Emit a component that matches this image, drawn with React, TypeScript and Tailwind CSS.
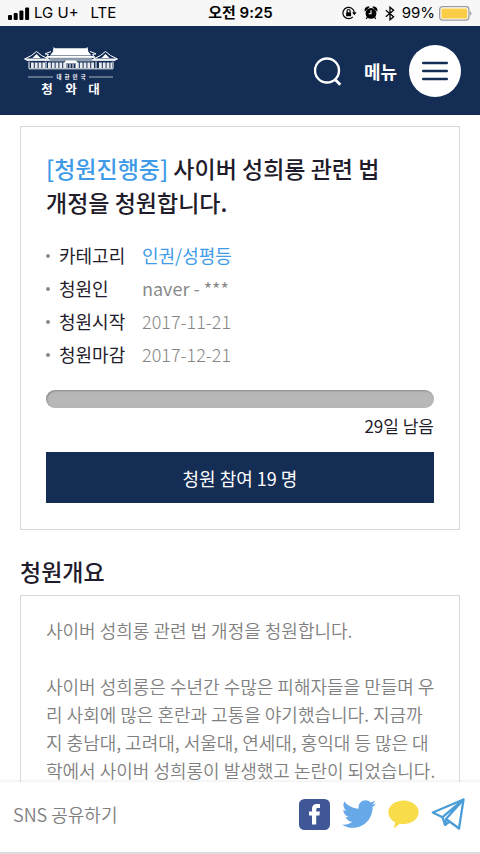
import React from 'react';
import { FaTwitter } from 'react-icons/fa';

interface MetaItem {
  label: string;
  value: string;
  className: string;
}

const meta: MetaItem[] = [
  { label: '카테고리', value: '인권/성평등', className: 'text-[#3f9be8]' },
  { label: '청원인', value: 'naver - ***', className: 'text-[#8a8a8a]' },
  { label: '청원시작', value: '2017-11-21', className: 'font-light text-[#858585]' },
  { label: '청원마감', value: '2017-12-21', className: 'font-light text-[#858585]' },
];

const StatusBar: React.FC = () => (
  <div className="grid h-[26px] shrink-0 grid-cols-[1fr_auto_1fr] items-center bg-[#f7f7f7] pr-[7px] pl-2 font-['Inter','Noto_Sans_CJK_KR',sans-serif] text-[15px] text-black">
    <div className="flex items-center gap-1">
      <svg width="22" height="13" viewBox="0 0 22 13" aria-hidden="true">
        <rect x="0" y="8" width="4" height="5" rx="1" />
        <rect x="5.7" y="6" width="4" height="7" rx="1" />
        <rect x="11.4" y="3.5" width="4" height="9.5" rx="1" />
        <rect x="17.1" y="0.5" width="4" height="12.5" rx="1" />
      </svg>
      <span>LG U+</span>
      <span className="ml-2">LTE</span>
    </div>
    <span className="font-semibold">오전 9:25</span>
    <div className="flex items-center justify-end gap-[7px]">
      <svg width="15" height="14" viewBox="0 0 15 14" fill="none" stroke="#000" strokeWidth="1.2" aria-hidden="true">
        <path d="M10.8 10.9A5.7 5.7 0 1 1 12.3 6.4" />
        <path d="M10.1 6.2h4.5l-2.3 3z" fill="#000" stroke="none" />
        <rect x="4.1" y="6.2" width="5" height="4" rx="0.5" fill="#000" stroke="none" />
        <path d="M5.1 6.4V5a1.5 1.5 0 0 1 3 0v1.4" />
      </svg>
      <svg width="14" height="14" viewBox="0 0 14 14" aria-hidden="true">
        <circle cx="7" cy="7.4" r="5.4" />
        <path d="M1.2 4.4A3 3 0 0 1 4.6 1.2zM12.8 4.4A3 3 0 0 0 9.4 1.2zM3.5 11l-1.3 2M10.5 11l1.3 2" stroke="#000" strokeWidth="1.2" />
        <path d="M7 4.2v3.6H4.6" fill="none" stroke="#fff" strokeWidth="1.1" />
      </svg>
      <svg width="10" height="15" viewBox="0 0 10 15" fill="none" stroke="#000" strokeWidth="1.3" aria-hidden="true">
        <path d="m.8 4.2 7.8 6.5L5 13.800V1.200l3.600 3.100L.8 10.800" />
      </svg>
      <div className="flex items-center gap-1">
        <span>99%</span>
        <svg width="34" height="15" viewBox="0 0 34 15" aria-hidden="true">
          <rect x="0.7" y="0.7" width="29.2" height="13.4" rx="2.8" fill="#fff" stroke="#9b9b9b" strokeWidth="1.3" />
          <rect x="2.4" y="2.4" width="25.8" height="10" rx="1" fill="#f9cd46" />
          <path d="M31.4 5q2 2.4 0 4.8z" fill="#777" />
        </svg>
      </div>
    </div>
  </div>
);

const Logo: React.FC = () => (
  <svg width="94" height="52" viewBox="0 0 94 52" fill="#fff" role="img" aria-label="대한민국 청와대">
    {/* main roof */}
    <path d="M29.5 2 31 3.2h31L63.500 2l.8 4.500 3 4H26l3-4z" />
    <path d="M27 6.500 21 8.800l3.500.8-2 2.400h48l-2-2.400 3.500-.8-6-2.300" fill="none" stroke="#fff" strokeWidth="1" />
    <path d="M24 11h45l2.500 1.800h-50z" />
    <rect x="26" y="13" width="42" height="2" opacity=".5" />
    <path d="M25 15.800h44" stroke="#fff" strokeWidth=".8" />
    {/* side pavilions */}
    <path d="M12.500 6.500Q8 11 .5 14h24Q17 11 12.500 6.500z" fill="none" stroke="#fff" strokeWidth="1" />
    <path d="M12.500 9 8.500 13h8z" />
    <path d="M81.500 6.500Q86 11 93.500 14h-24Q77 11 81.500 6.500z" fill="none" stroke="#fff" strokeWidth="1" />
    <path d="M81.500 9l4 4h-8z" />
    <path d="M.5 14h26L25 16H3zM67.500 14h26L91 16H69z" opacity=".85" />
    {/* walls and columns */}
    <path d="M5 16.500v7M22 16.500v7M72 16.500v7M89 16.500v7" stroke="#fff" strokeWidth="1" />
    <path d="M7 20.200h14M24 20.200h18M52 20.200h18M75 20.200h13" stroke="#fff" strokeWidth="5.500" strokeDasharray="2.800 1" opacity=".9" />
    <path d="M40 18.500 42 15.500h10l2 3z" />
    <path d="M43 19v4M46 19v4M49 19v4M52 19v4" stroke="#fff" strokeWidth="1" />
    <path d="M5 23.800h84" stroke="#fff" strokeWidth="1" />
    <path d="M4 32h25M65 32h24" stroke="#fff" strokeWidth=".8" opacity=".8" />
    <g className="font-['Noto_Sans_CJK_KR',sans-serif] font-bold" textAnchor="middle">
      <g fontSize="5.500">
        <text x="35" y="34">대</text>
        <text x="43" y="34">한</text>
        <text x="51" y="34">민</text>
        <text x="59" y="34">국</text>
      </g>
      <g fontSize="12.500">
        <text x="23" y="49">청</text>
        <text x="47" y="49">와</text>
        <text x="70" y="49">대</text>
      </g>
    </g>
  </svg>
);

const Header: React.FC = () => (
  <header className="flex h-[89px] shrink-0 items-center justify-between bg-[#142d55] pr-[19px] pl-6">
    <a href="#home">
      <Logo />
    </a>
    <div className="flex items-center">
      <button type="button" aria-label="검색" className="mr-[22px]">
        <svg width="28" height="30" viewBox="0 0 28 30" fill="none" stroke="#fff" strokeWidth="2.400">
          <circle cx="13" cy="14.500" r="12" />
          <path d="m20.500 23 5.800 5.800" strokeWidth="2.800" />
        </svg>
      </button>
      <button type="button" className="flex items-center gap-3 text-lg font-bold text-white">
        메뉴
        <span className="flex size-[52px] items-center justify-center rounded-full bg-white">
          <svg width="26" height="20" viewBox="0 0 26 20" stroke="#142d55" strokeWidth="2.400" strokeLinecap="round" aria-hidden="true">
            <path d="M1.200 2h23.600M1.200 10h23.600M1.200 18h23.600" />
          </svg>
        </span>
      </button>
    </div>
  </header>
);

const ShareBar: React.FC = () => (
  <footer className="relative flex h-[72px] shrink-0 items-center justify-between border-b-2 border-[#dcdcdc] bg-white pr-[15px] pb-[6px] pl-[13px] shadow-[0_-1px_3px_rgba(0,0,0,0.08)]">
    <span className="text-lg font-[350] text-[#808080]">SNS 공유하기</span>
    <div className="flex items-center gap-3">
      <a href="#facebook" aria-label="Facebook">
        <svg width="31" height="31" viewBox="0 0 31 31">
          <rect width="31" height="31" rx="5.500" fill="#3f5796" />
          <path d="M13 25.500v-9h-3v-4h3v-2.700c0-3.300 1.700-4.800 4.700-4.800h3.300v4h-2c-1.400 0-1.800.6-1.800 1.700v1.800h3.700l-.5 4h-3.200v9z" fill="#fff" />
        </svg>
      </a>
      <a href="#twitter" aria-label="Twitter" className="text-[#67a9e8]">
        <FaTwitter size={34} />
      </a>
      <a href="#kakaotalk" aria-label="KakaoTalk">
        <svg width="31" height="29" viewBox="0 0 31 29" fill="#f8dc4a">
          <path d="M15.500.5C24 .5 30.700 5.700 30.700 12.200S24 24 15.500 24c-1.300 0-2.500-.1-3.700-.3L6 28.500l1.200-6.300C3 20.200.3 16.500.3 12.200.3 5.700 7 .5 15.500.5z" />
        </svg>
      </a>
      <a href="#telegram" aria-label="Telegram">
        <svg width="34" height="32" viewBox="0 0 34 32" fill="none" stroke="#4a9dd6" strokeWidth="2.300" strokeLinejoin="round">
          <path d="M32.500 1.500 1.800 14.500 11.500 19.200 14 27 18.500 23.500 28 30.500z" />
          <path d="M32.500 1.500 11.500 19.200M32.500 1.500 15 21 14 27M15 21l3.500 2.500" />
        </svg>
      </a>
    </div>
  </footer>
);

const App: React.FC = () => {
  return (
    <div className="flex h-screen flex-col bg-white font-['Noto_Sans_CJK_KR',sans-serif] text-[#1f1c2b]">
      <StatusBar />
      <Header />

      <main className="min-h-0 flex-1 overflow-y-auto px-5 pt-[11px] [scrollbar-width:none]">
        {/* Petition summary */}
        <section className="border border-[#d8d8d8] px-[25px] pt-6 pb-[26px]">
          <h1 className="text-[23px] leading-[34px] font-medium break-keep">
            <span className="text-[#3f9be8]">[청원진행중]</span> 사이버 성희롱 관련 법 개정을 청원합니다.
          </h1>

          <ul className="mt-5 text-lg leading-[33px]">
            {meta.map((item) => (
              <li key={item.label} className="flex items-center">
                <span className="mr-[9px] size-1 rounded-full bg-[#8a8a8a]" />
                <span className="w-[83px]">{item.label}</span>
                <span className={item.className}>{item.value}</span>
              </li>
            ))}
          </ul>

          <div className="mt-[19px] h-[18px] rounded-full bg-[#b8b8b8] shadow-[inset_1px_1px_2px_rgba(0,0,0,0.25)]" />
          <p className="mt-1 text-right text-[17px] leading-7">29일 남음</p>
          <button type="button" className="mt-3 h-[51px] w-full bg-[#142d55] text-lg text-white">
            청원 참여 19 명
          </button>
        </section>

        {/* Petition body */}
        <h2 className="mt-[23px] text-[23px] leading-9 font-medium">청원개요</h2>
        <section className="mt-[6px] border border-[#d8d8d8] py-5 pr-[23px] pl-[25px] text-lg leading-7 font-[350] break-all text-[#808080]">
          <p>사이버 성희롱 관련 법 개정을 청원합니다.</p>
          <p className="mt-7">
            사이버 성희롱은 수년간 수많은 피해자들을 만들며 우리 사회에 많은 혼란과 고통을 야기했습니다. 지금까지 충남대, 고려대, 서울대, 연세대, 홍익대 등 많은 대학에서 사이버 성희롱이 발생했고 논란이 되었습니다.
          </p>
        </section>
      </main>

      <ShareBar />
    </div>
  );
};

export default App;
